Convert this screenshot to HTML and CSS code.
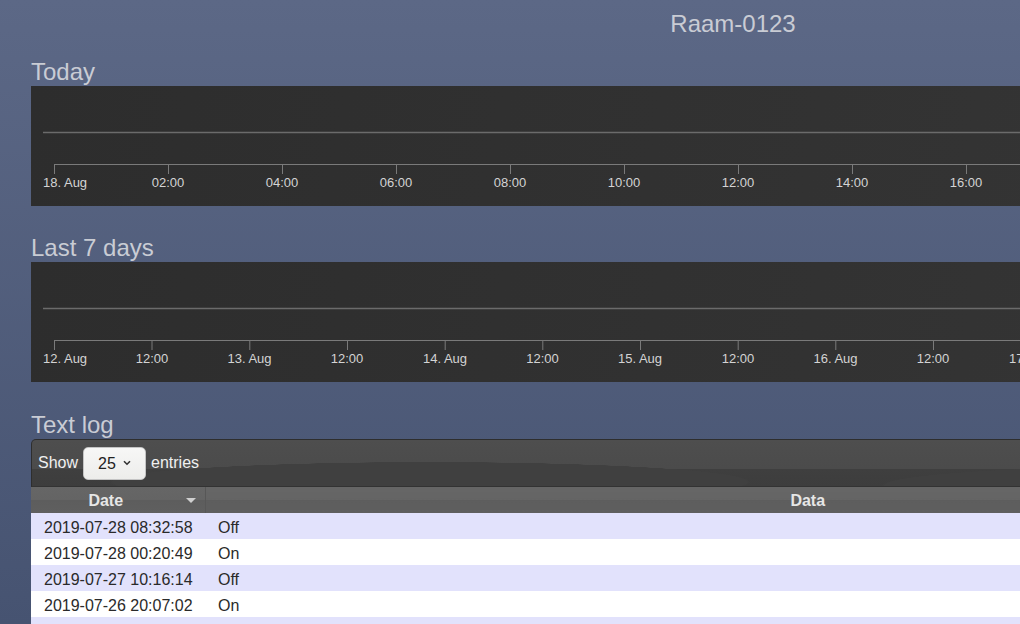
FILE: index.html
```html
<!DOCTYPE html>
<html>
<head>
    <title>Raam-0123</title>
    <link rel="stylesheet" href="styles.css">
</head>
<body>
    <div class="page">
        <h1 class="page-title">Raam-0123</h1>

        <h2 class="section-title">Today</h2>
        <div class="chart">
            <svg width="1404" height="120">
                <line class="grid" x1="12" y1="46.5" x2="1404" y2="46.5"/>
                <line class="axis" x1="23" y1="78.5" x2="1404" y2="78.5"/>
                <path class="axis" d="M23.5 78V88M137.5 78V88M251.5 78V88M365.5 78V88M479.5 78V88M593.5 78V88M707.5 78V88M821.5 78V88M935.5 78V88M1049.5 78V88M1163.5 78V88M1277.5 78V88M1391.5 78V88"/>
                <text x="12" y="101">18. Aug</text>
                <text class="mid" x="137" y="101">02:00</text>
                <text class="mid" x="251" y="101">04:00</text>
                <text class="mid" x="365" y="101">06:00</text>
                <text class="mid" x="479" y="101">08:00</text>
                <text class="mid" x="593" y="101">10:00</text>
                <text class="mid" x="707" y="101">12:00</text>
                <text class="mid" x="821" y="101">14:00</text>
                <text class="mid" x="935" y="101">16:00</text>
                <text class="mid" x="1049" y="101">18:00</text>
                <text class="mid" x="1163" y="101">20:00</text>
                <text class="mid" x="1277" y="101">22:00</text>
            </svg>
        </div>

        <h2 class="section-title">Last 7 days</h2>
        <div class="chart chart-last">
            <svg width="1404" height="120">
                <line class="grid" x1="12" y1="46.5" x2="1404" y2="46.5"/>
                <line class="axis" x1="23" y1="78.5" x2="1404" y2="78.5"/>
                <path class="axis" d="M23.5 78V88M121 78V88M218.8 78V88M316.5 78V88M414.2 78V88M511.8 78V88M609.5 78V88M707.2 78V88M804.8 78V88M902.5 78V88M1000.2 78V88M1097.8 78V88M1195.5 78V88M1293.2 78V88M1390.8 78V88"/>
                <text x="12" y="101">12. Aug</text>
                <text class="mid" x="121" y="101">12:00</text>
                <text class="mid" x="218.5" y="101">13. Aug</text>
                <text class="mid" x="316" y="101">12:00</text>
                <text class="mid" x="414" y="101">14. Aug</text>
                <text class="mid" x="511.5" y="101">12:00</text>
                <text class="mid" x="609" y="101">15. Aug</text>
                <text class="mid" x="707" y="101">12:00</text>
                <text class="mid" x="804.5" y="101">16. Aug</text>
                <text class="mid" x="902" y="101">12:00</text>
                <text class="mid" x="1000" y="101">17. Aug</text>
                <text class="mid" x="1097.5" y="101">12:00</text>
                <text class="mid" x="1195" y="101">18. Aug</text>
                <text class="mid" x="1293" y="101">12:00</text>
            </svg>
        </div>

        <h2 class="section-title">Text log</h2>
        <div class="log">
            <div class="log-toolbar">
                <span>Show</span>
                <span class="select-wrap">
                    <select class="length-select">
                        <option>10</option>
                        <option selected>25</option>
                        <option>50</option>
                        <option>100</option>
                    </select>
                    <svg class="chevron" width="8" height="6" viewBox="0 0 8 6"><path d="M1 1.2L4 4.2L7 1.2" fill="none" stroke="#333" stroke-width="1.6"/></svg>
                </span>
                <span>entries</span>
            </div>
            <table class="log-table">
                <colgroup>
                    <col class="col-date">
                    <col>
                </colgroup>
                <thead>
                    <tr>
                        <th class="sorted">Date</th>
                        <th>Data</th>
                    </tr>
                </thead>
                <tbody>
                    <tr><td>2019-07-28 08:32:58</td><td>Off</td></tr>
                    <tr><td>2019-07-28 00:20:49</td><td>On</td></tr>
                    <tr><td>2019-07-27 10:16:14</td><td>Off</td></tr>
                    <tr><td>2019-07-26 20:07:02</td><td>On</td></tr>
                    <tr><td>2019-07-26 08:41:37</td><td>Off</td></tr>
                    <tr><td>2019-07-25 22:15:09</td><td>On</td></tr>
                </tbody>
            </table>
        </div>
    </div>
</body>
</html>
```

FILE: styles.css
```css
body {
    margin: 0;
    height: 624px;
    overflow: hidden;
    background: linear-gradient(#5c6886, #465371);
    font-family: "Liberation Sans", Arial, sans-serif;
}

.page {
    margin-left: 31px;
    width: 1404px;
    padding-top: 10px;
}

.page-title {
    margin: 0 0 20px;
    font-size: 24px;
    line-height: 28px;
    font-weight: normal;
    text-align: center;
    color: #c9ccd4;
}

.section-title {
    margin: 0;
    font-size: 24px;
    line-height: 28px;
    font-weight: normal;
    color: #c9ccd4;
}

.chart {
    height: 120px;
    margin-bottom: 28px;
    background: linear-gradient(100deg, #2d2d2d, #363636);
}

.chart-last {
    margin-bottom: 29px;
}

.chart svg {
    display: block;
}

.chart .grid {
    stroke: #6b6b6b;
    stroke-width: 1.5;
}

.chart .axis {
    stroke: #7a7a7a;
    stroke-width: 1;
    fill: none;
}

.chart text {
    font-family: "Liberation Sans", Arial, sans-serif;
    font-size: 13px;
    fill: #d4d4d4;
}

.chart text.mid {
    text-anchor: middle;
}

.log-toolbar {
    height: 46px;
    display: flex;
    align-items: center;
    gap: 5px;
    padding-left: 6px;
    border: 1px solid #2e2e2e;
    border-bottom-color: #333;
    border-radius: 5px 5px 0 0;
    background:
        radial-gradient(ellipse 320px 20px at 398px 42px, #404040 99%, transparent 100%),
        radial-gradient(ellipse 300px 20px at 1150px 46px, #404040 99%, transparent 100%),
        linear-gradient(#4e4e4e 0, #4b4b4b 29px, #3f3f3f 29px, #3d3d3d 100%);
    color: #f0f0f0;
    font-size: 16px;
}

.select-wrap {
    position: relative;
    display: inline-block;
}

.length-select {
    appearance: none;
    width: 63px;
    height: 33px;
    padding: 0 0 0 14px;
    border: 1px solid #c4c4c4;
    border-radius: 5px;
    background: linear-gradient(#f7f7f6, #ededeb);
    color: #222;
    font-family: "Liberation Sans", Arial, sans-serif;
    font-size: 16px;
    display: block;
}

.chevron {
    position: absolute;
    left: 40px;
    top: 13px;
    pointer-events: none;
}

.log-table {
    width: 100%;
    border-collapse: collapse;
    table-layout: fixed;
    font-size: 16px;
}

.col-date {
    width: 174px;
}

.log-table th {
    position: relative;
    height: 25px;
    padding: 1px 30px 0 6px;
    background: linear-gradient(#666 0, #646464 50%, #5d5d5d 50%, #5f5f5f 100%);
    border-right: 1px solid #575757;
    color: #e6e6e6;
    font-weight: bold;
    line-height: 25px;
    text-align: center;
}

.log-table th.sorted::after {
    content: "";
    position: absolute;
    right: 9px;
    top: 11px;
    border-left: 5px solid transparent;
    border-right: 5px solid transparent;
    border-top: 5px solid #d0d0d0;
}

.log-table td {
    height: 22px;
    padding: 4px 13px 0;
    line-height: 22px;
    color: #2a2a2a;
    white-space: nowrap;
}

.log-table tbody tr:nth-child(odd) {
    background: #e2e2fc;
}

.log-table tbody tr:nth-child(even) {
    background: #fff;
}
```
